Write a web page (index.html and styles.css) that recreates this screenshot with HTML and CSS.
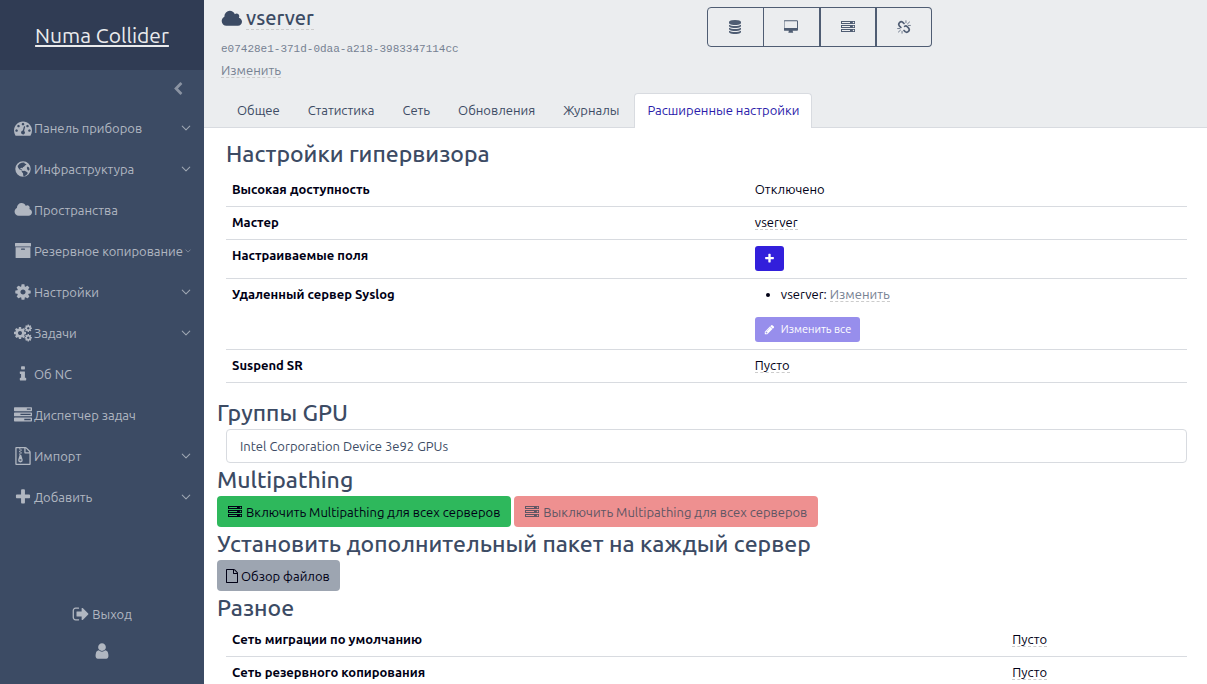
FILE: index.html
```html
<!DOCTYPE html>
<html lang="ru">
<head>
<meta charset="utf-8">
<title>vserver — Numa Collider</title>
<link rel="stylesheet" href="styles.css">
</head>
<body>
<svg class="sprite" aria-hidden="true">
  <symbol id="cloud" viewBox="0 0 1984 1792"><path d="M1984 1152q0 159-112.500 271.500t-271.500 112.500h-1088q-185 0-316.500-131.500t-131.500-316.500q0-132 71-241.500t187-163.500q-2-28-2-43 0-212 150-362t362-150q158 0 286.500 88t187.500 230q70-62 166-62 106 0 181 75t75 181q0 75-41 138 129 30 213 134.500t84 239.500z"/></symbol>
  <symbol id="database" viewBox="0 0 1792 1792"><path d="M896 768q237 0 443-43t325-127v170q0 69-103 128t-280 93.500-385 34.500-385-34.500-280-93.500-103-128v-170q119 84 325 127t443 43zm0 768q237 0 443-43t325-127v170q0 69-103 128t-280 93.500-385 34.500-385-34.500-280-93.500-103-128v-170q119 84 325 127t443 43zm0-384q237 0 443-43t325-127v170q0 69-103 128t-280 93.500-385 34.500-385-34.500-280-93.500-103-128v-170q119 84 325 127t443 43zm0-1152q208 0 385 34.500t280 93.500 103 128v128q0 69-103 128t-280 93.500-385 34.500-385-34.500-280-93.500-103-128v-128q0-69 103-128t280-93.500 385-34.500z"/></symbol>
  <symbol id="desktop" viewBox="0 0 1856 1792"><path d="M1728 992v-832q0-13-9.500-22.500t-22.500-9.500h-1600q-13 0-22.500 9.500t-9.500 22.500v832q0 13 9.500 22.500t22.500 9.500h1600q13 0 22.500-9.500t9.500-22.500zm128-832v1088q0 66-47 113t-113 47h-544q0 37 16 77.500t32 71 16 43.500q0 26-19 45t-45 19h-512q-26 0-45-19t-19-45q0-14 16-44t32-70 16-78h-544q-66 0-113-47t-47-113v-1088q0-66 47-113t113-47h1600q66 0 113 47t47 113z"/></symbol>
  <symbol id="server" viewBox="0 0 1792 1792"><path fill-rule="evenodd" d="M0 128h1792v384H0zM128 256v128h1024V256zM0 640h1792v384H0zM128 768v128h1024V768zM0 1152h1792v384H0zM128 1280v128h1024v-128zM1504 320a96 96 0 1 0 192 0a96 96 0 1 0-192 0zM1504 832a96 96 0 1 0 192 0a96 96 0 1 0-192 0zM1504 1344a96 96 0 1 0 192 0a96 96 0 1 0-192 0z"/></symbol>
  <symbol id="unlink" viewBox="0 0 18 18"><g fill="none" stroke="currentColor" stroke-linecap="round"><path stroke-width="2.200" d="M9 4.500 7.500 3Q5.300 1.300 3.300 3.300T3 7.500L5 9.600M9 13.500l1.500 1.500q2.200 1.700 4.200-.3t.3-4.200L13 8.400Q11.500 7 9.800 8.200"/><path stroke-width="1" d="M11.500 1v2.500M13.500 5l2.700-2.500M14.500 7h2.700M.8 11h2.700M1.800 15.500l2.700-2.500M6.500 14.500V17"/></g></symbol>
  <symbol id="tachometer" viewBox="0 0 1792 1792"><path d="M384 1152q0-53-37.500-90.500t-90.500-37.500-90.500 37.500-37.500 90.500 37.500 90.500 90.500 37.500 90.500-37.500 37.500-90.500zm192-448q0-53-37.500-90.500t-90.500-37.500-90.500 37.500-37.500 90.500 37.500 90.500 90.500 37.500 90.500-37.500 37.500-90.500zm428 481l101-382q6-26-7.500-48.500t-38.500-29.500-48 6.500-30 39.500l-101 382q-60 5-107 43.500t-63 98.500q-20 77 20 146t117 89 146-20 89-117q16-60-6-117t-72-91zm660-33q0-53-37.500-90.500t-90.500-37.500-90.500 37.500-37.500 90.500 37.500 90.500 90.500 37.500 90.500-37.500 37.500-90.500zm-640-640q0-53-37.500-90.500t-90.500-37.500-90.500 37.500-37.500 90.500 37.500 90.500 90.500 37.500 90.500-37.500 37.500-90.500zm448 192q0-53-37.500-90.500t-90.500-37.500-90.500 37.500-37.500 90.500 37.500 90.500 90.500 37.500 90.500-37.500 37.500-90.500zm320 448q0 261-141 483-19 29-54 29h-1402q-35 0-54-29-141-221-141-483 0-182 71-348t191-286 286-191 348-71 348 71 286 191 191 286 71 348z"/></symbol>
  <symbol id="globe" viewBox="0 0 18 18"><path fill-rule="evenodd" d="M9 1.300a7.700 7.700 0 1 0 0 15.400A7.700 7.700 0 1 0 9 1.300zM9.500 2.600l1.500.5-.5 1 1.200-.4.800.8-1.500 1-1 1.200-1 .2-.5 1.400-1-.6-1.200.6.300 1.200 1-.4.300 1.400 1 .5 1.600-.3 1.600.8 1.700 1.200-.6 1.500-1.900 1.600-1.500 1-.6-1.600-.2-1.900-1.300-1.500.2-1.300L5.500 9.500 4.200 7.700 3.600 6 5.500 3.700 7.500 2.800zM13.700 6.500l1.600 1.200.2 2-1.300 1-1-1.400-.4-1.500z"/></symbol>
  <symbol id="archive" viewBox="0 0 18 18"><path fill-rule="evenodd" d="M1.500 1h15q.5 0 .5.500V4q0 .5-.5.500h-15Q1 4.500 1 4V1.500Q1 1 1.500 1zM1.600 5.300h14.800V15.500q0 .6-.6.600H2.200q-.6 0-.6-.6zM7.600 6.600q-.6 0-.6.600t.6.600h2.800q.6 0 .6-.6t-.6-.6z"/></symbol>
  <symbol id="cog" viewBox="0 0 1792 1792"><path d="M1152 896q0-106-75-181t-181-75-181 75-75 181 75 181 181 75 181-75 75-181zm512-109v222q0 12-8 23t-20 13l-185 28q-19 54-39 91 35 50 107 138 10 12 10 25t-9 23q-27 37-99 108t-94 71q-12 0-26-9l-138-108q-44 23-91 38-16 136-29 186-7 28-36 28h-222q-14 0-24.500-8.500t-11.500-21.500l-28-184q-49-16-90-37l-141 107q-10 9-25 9-14 0-25-11-126-114-165-168-7-10-7-23 0-12 8-23 15-21 51-66.500t54-70.500q-27-50-41-99l-183-27q-13-2-21-12.500t-8-23.500v-222q0-12 8-23t19-13l186-28q14-46 39-92-40-57-107-138-10-12-10-24 0-10 9-23 26-36 98.500-107.500t94.500-71.500q13 0 26 10l138 107q44-23 91-38 16-136 29-186 7-28 36-28h222q14 0 24.500 8.500t11.500 21.500l28 184q49 16 90 37l142-107q9-9 24-9 13 0 25 10 129 119 165 170 7 8 7 22 0 12-8 23-15 21-51 66.500t-54 70.500q26 50 41 98l183 28q13 2 21 12.500t8 23.500z"/></symbol>
  <symbol id="cogs" viewBox="0 0 18 18"><use href="#cog" x="-1" y="2" width="14" height="14"/><use href="#cog" x="10" y="0" width="8.500" height="8.500"/><use href="#cog" x="10" y="9.500" width="8.500" height="8.500"/></symbol>
  <symbol id="info" viewBox="0 0 1792 1792"><path d="M1216 1344v128q0 26-19 45t-45 19h-512q-26 0-45-19t-19-45v-128q0-26 19-45t45-19h64v-384h-64q-26 0-45-19t-19-45v-128q0-26 19-45t45-19h384q26 0 45 19t19 45v576h64q26 0 45 19t19 45zm-128-1152v192q0 26-19 45t-45 19h-256q-26 0-45-19t-19-45v-192q0-26 19-45t45-19h256q26 0 45 19t19 45z"/></symbol>
  <symbol id="tasks" viewBox="0 0 1792 1792"><path fill-rule="evenodd" d="M64 128h1664q64 0 64 64v256q0 64-64 64H64q-64 0-64-64V192q0-64 64-64zM1280 256v128h384V256zM64 640h1664q64 0 64 64v256q0 64-64 64H64q-64 0-64-64V704q0-64 64-64zM640 768v128h1024V768zM64 1152h1664q64 0 64 64v256q0 64-64 64H64q-64 0-64-64v-256q0-64 64-64zM1024 1280v128h640v-128z"/></symbol>
  <symbol id="zip" viewBox="0 0 1792 1792"><path d="M1596 380q28 28 48 76t20 88v1152q0 40-28 68t-68 28h-1344q-40 0-68-28t-28-68v-1600q0-40 28-68t68-28h896q40 0 88 20t76 48zm-444-244v376h376q-10-29-22-41l-313-313q-12-12-41-22zm384 1528v-1024h-416q-40 0-68-28t-28-68v-416h-768v1536h1280z"/><path fill-rule="evenodd" d="M512 128h128v128H512zM640 256h128v128H640zM512 384h128v128H512zM640 512h128v128H640zM512 640h128v128H512zM560 800h160l150 500q20 220-230 236-250-16-230-236zM640 1216a120 76 0 1 0 0 152a120 76 0 1 0 0-152z"/></symbol>
  <symbol id="plus" viewBox="0 0 1792 1792"><path d="M1600 736v192q0 40-28 68t-68 28h-416v416q0 40-28 68t-68 28h-192q-40 0-68-28t-28-68v-416h-416q-40 0-68-28t-28-68v-192q0-40 28-68t68-28h416v-416q0-40 28-68t68-28h192q40 0 68 28t28 68v416h416q40 0 68 28t28 68z"/></symbol>
  <symbol id="signout" viewBox="0 0 1792 1792"><path d="M704 1440q0 4 1 20t.5 26.500-3 23.500-10 19.500-20.500 6.500h-320q-119 0-203.500-84.500t-84.500-203.500v-704q0-119 84.500-203.500t203.500-84.500h320q13 0 22.500 9.500t9.500 22.500q0 4 1 20t.5 26.500-3 23.500-10 19.500-20.500 6.500h-320q-66 0-113 47t-47 113v704q0 66 47 113t113 47h312l11.500 1 11.500 3 8 5.500 7 9 2 13.500zm928-544q0 26-19 45l-544 544q-19 19-45 19t-45-19-19-45v-288h-448q-26 0-45-19t-19-45v-384q0-26 19-45t45-19h448v-288q0-26 19-45t45-19 45 19l544 544q19 19 19 45z"/></symbol>
  <symbol id="user" viewBox="0 0 1792 1792"><path d="M1536 1399q0 109-62.500 187t-150.500 78h-854q-88 0-150.500-78t-62.500-187q0-85 8.500-160.500t31.500-152 58.500-131 94-89 134.500-34.500q131 128 313 128t313-128q76 0 134.500 34.500t94 89 58.500 131 31.500 152 8.500 160.500zm-256-887q0 159-112.500 271.500t-271.500 112.500-271.500-112.500-112.500-271.500 112.500-271.500 271.500-112.500 271.500 112.500 112.500 271.500z"/></symbol>
  <symbol id="pencil" viewBox="0 0 1792 1792"><path d="M491 1536l91-91-235-235-91 91v107h128v128h107zm523-928q0-22-22-22-10 0-17 7l-542 542q-7 7-7 17 0 22 22 22 10 0 17-7l542-542q7-7 7-17zm-54-192l416 416-832 832h-416v-416zm683 96q0 53-37 90l-166 166-416-416 166-165q36-38 90-38 53 0 91 38l235 234q37 39 37 91z"/></symbol>
  <symbol id="back" viewBox="0 0 1792 1792"><path d="M1427 301l-531 531 531 531q19 19 19 45t-19 45l-166 166q-19 19-45 19t-45-19l-742-742q-19-19-19-45t19-45l742-742q19-19 45-19t45 19l166 166q19 19 19 45t-19 45z"/></symbol>
  <symbol id="file" viewBox="0 0 1792 1792"><path d="M1596 380q28 28 48 76t20 88v1152q0 40-28 68t-68 28h-1344q-40 0-68-28t-28-68v-1600q0-40 28-68t68-28h896q40 0 88 20t76 48zm-444-244v376h376q-10-29-22-41l-313-313q-12-12-41-22zm384 1528v-1024h-416q-40 0-68-28t-28-68v-416h-768v1536h1280z"/></symbol>
  <symbol id="down" viewBox="0 0 16 16"><path fill="none" stroke="currentColor" stroke-width="1.700" stroke-linecap="round" stroke-linejoin="round" d="M2 5l6 6 6-6"/></symbol>
</svg>
<div class="app">
  <aside class="sidebar">
    <div class="brand"><a href="#">Numa Collider</a></div>
    <button class="collapse" aria-label="Свернуть меню"><svg class="icon-sm"><use href="#back"/></svg></button>
    <nav class="menu">
      <a href="#"><svg class="icon"><use href="#tachometer"/></svg><span>Панель приборов</span><svg class="caret"><use href="#down"/></svg></a>
      <a href="#"><svg class="icon"><use href="#globe"/></svg><span>Инфраструктура</span><svg class="caret"><use href="#down"/></svg></a>
      <a href="#"><svg class="icon"><use href="#cloud"/></svg><span>Пространства</span></a>
      <a href="#"><svg class="icon"><use href="#archive"/></svg><span>Резервное копирование</span><svg class="caret"><use href="#down"/></svg></a>
      <a href="#"><svg class="icon"><use href="#cog"/></svg><span>Настройки</span><svg class="caret"><use href="#down"/></svg></a>
      <a href="#"><svg class="icon"><use href="#cogs"/></svg><span>Задачи</span><svg class="caret"><use href="#down"/></svg></a>
      <a href="#"><svg class="icon"><use href="#info"/></svg><span>Об NC</span></a>
      <a href="#"><svg class="icon"><use href="#tasks"/></svg><span>Диспетчер задач</span></a>
      <a href="#"><svg class="icon"><use href="#zip"/></svg><span>Импорт</span><svg class="caret"><use href="#down"/></svg></a>
      <a href="#"><svg class="icon"><use href="#plus"/></svg><span>Добавить</span><svg class="caret"><use href="#down"/></svg></a>
    </nav>
    <div class="account">
      <a href="#"><svg class="icon"><use href="#signout"/></svg>Выход</a>
      <a href="#" aria-label="Пользователь"><svg class="icon"><use href="#user"/></svg></a>
    </div>
  </aside>
  <div class="page">
    <header class="header">
      <div class="header-top">
        <div class="identity">
          <h2><svg class="title-icon"><use href="#cloud"/></svg><span class="editable">vserver</span></h2>
          <div class="uuid">e07428e1-371d-0daa-a218-3983347114cc</div>
          <div class="description"><span class="editable muted">Изменить</span></div>
        </div>
        <div class="actions">
          <button aria-label="Хранилище"><svg class="icon-sm"><use href="#database"/></svg></button>
          <button aria-label="ВМ"><svg class="icon-sm"><use href="#desktop"/></svg></button>
          <button aria-label="Сервер"><svg class="icon-sm"><use href="#server"/></svg></button>
          <button aria-label="Отключить"><svg class="icon-sm"><use href="#unlink"/></svg></button>
        </div>
      </div>
      <nav class="tabs">
        <a href="#">Общее</a>
        <a href="#">Статистика</a>
        <a href="#">Сеть</a>
        <a href="#">Обновления</a>
        <a href="#">Журналы</a>
        <a href="#" class="active" aria-current="page">Расширенные настройки</a>
      </nav>
    </header>
    <main class="content">
      <section class="inset hypervisor">
        <h3>Настройки гипервизора</h3>
        <table>
          <tr><th scope="row">Высокая доступность</th><td>Отключено</td></tr>
          <tr><th scope="row">Мастер</th><td><span class="editable">vserver</span></td></tr>
          <tr><th scope="row">Настраиваемые поля</th><td><button class="btn-small" aria-label="Добавить поле"><svg class="icon-xs"><use href="#plus"/></svg></button></td></tr>
          <tr><th scope="row">Удаленный сервер Syslog</th><td>
            <ul><li>vserver: <span class="editable muted">Изменить</span></li></ul>
            <button class="btn-small" disabled><svg class="icon-xs"><use href="#pencil"/></svg>Изменить все</button>
          </td></tr>
          <tr><th scope="row">Suspend SR</th><td><span class="editable">Пусто</span></td></tr>
        </table>
      </section>
      <h3>Группы GPU</h3>
      <ul class="inset gpu-list"><li>Intel Corporation Device 3e92 GPUs</li></ul>
      <h3>Multipathing</h3>
      <div class="buttons">
        <button class="btn success"><svg class="icon-sm"><use href="#server"/></svg>Включить Multipathing для всех серверов</button>
        <button class="btn danger" disabled><svg class="icon-sm"><use href="#server"/></svg>Выключить Multipathing для всех серверов</button>
      </div>
      <h3>Установить дополнительный пакет на каждый сервер</h3>
      <div class="buttons">
        <button class="btn browse"><svg class="icon-sm"><use href="#file"/></svg>Обзор файлов</button>
      </div>
      <h3>Разное</h3>
      <section class="inset misc">
        <table>
          <tr><th scope="row">Сеть миграции по умолчанию</th><td><span class="editable">Пусто</span></td></tr>
          <tr><th scope="row">Сеть резервного копирования</th><td><span class="editable">Пусто</span></td></tr>
        </table>
      </section>
    </main>
  </div>
</div>
</body>
</html>
```
FILE: styles.css
```css
* { box-sizing: border-box; }

body {
  margin: 0;
  font: 13px/20px Ubuntu, "Noto Sans", sans-serif;
  color: #000015;
  background: #fff;
  overflow: hidden;
}

svg { fill: currentColor; flex: none; }
a { color: inherit; text-decoration: none; }
button { font: inherit; color: inherit; cursor: pointer; }
button:disabled { cursor: default; }

.sprite { position: absolute; width: 0; height: 0; }
.icon { width: 18px; height: 18px; }
.icon-sm { width: 14px; height: 14px; }
.icon-xs { width: 11px; height: 11px; }

.app { display: flex; height: 100vh; }

/* Sidebar */
.sidebar {
  display: flex;
  flex-direction: column;
  flex: 0 0 204px;
  min-width: 0;
  background: #3c4b64;
  color: #b1b7c1;
}
.brand {
  display: flex;
  align-items: center;
  justify-content: center;
  height: 70px;
  flex: none;
  background: #303c54;
  color: #eaebed;
  font-size: 21px;
}
.brand a { text-decoration: underline; }
.collapse {
  display: flex;
  align-self: flex-end;
  align-items: center;
  height: 37px;
  margin-right: 19px;
  padding: 0;
  border: 0;
  background: none;
  color: #8a93a2;
}
.menu { display: flex; flex-direction: column; }
.menu a {
  display: flex;
  align-items: center;
  height: 41px;
  padding: 0 13px 0 14px;
  gap: 2px;
  white-space: nowrap;
}
.caret { width: 10px; height: 10px; margin-left: auto; flex: 0 1 10px; min-width: 0; color: #9da5b1; }
.account {
  display: flex;
  flex-direction: column;
  align-items: center;
  gap: 18px;
  margin-top: auto;
  padding-bottom: 24px;
}
.account a { display: flex; align-items: center; gap: 2px; }

/* Header */
.page { flex: 1; min-width: 0; }
.header {
  background: #ebedef;
  border-bottom: 1px solid #d8dbe0;
  color: #3c4b64;
}
.header-top {
  display: grid;
  grid-template-columns: 1fr 1fr;
  padding: 7px 15px 0 17px;
}
h2, h3 {
  margin: 0;
  font-family: "Ubuntu Medium", Ubuntu, "Noto Sans", sans-serif;
  font-weight: 500;
  color: #3c4b64;
}
h2 {
  display: flex;
  align-items: center;
  gap: 4px;
  font-size: 20px;
  line-height: 22px;
}
.title-icon { width: 21px; height: 20px; }
.uuid {
  margin-top: 9px;
  font: 11px/20px "Liberation Mono", monospace;
  color: #768192;
}
.description { margin-top: 1px; }
.editable { border-bottom: 1px dashed #ccc; }
.muted { color: #768192; }
.actions { display: flex; align-items: flex-start; }
.actions button {
  display: flex;
  align-items: center;
  justify-content: center;
  width: 57px;
  height: 40px;
  padding: 0;
  border: 1px solid #4f5d73;
  background: none;
  color: #4f5d73;
}
.actions button + button { margin-left: -1px; }
.actions button:nth-child(n+3) { border-left-width: 2px; }
.actions button:first-child { border-radius: 4px 0 0 4px; }
.actions button:last-child { border-radius: 0 4px 4px 0; }
.tabs { display: flex; gap: 2px; margin: 13px 0 -1px 20px; }
.tabs a {
  padding: 6px 12px 8px;
  border: 1px solid transparent;
  border-bottom: 0;
  border-radius: 4px 4px 0 0;
}
.tabs .active {
  background: #fff;
  border-color: #d8dbe0;
  color: #2a1aaa;
}

/* Content */
.content { padding: 9px 11px 0 13px; }
h3 { margin: 3px 0 2px; font-size: 23px; line-height: 28px; }
.inset { margin: 0 9px; }
table {
  width: 100%;
  border-collapse: collapse;
  table-layout: fixed;
  line-height: 19px;
}
th, td {
  padding: 6px 6px 7px;
  border-bottom: 1px solid #d8dbe0;
  text-align: left;
  vertical-align: top;
}
.hypervisor { margin-bottom: 16px; }
.hypervisor h3 { margin-bottom: 6px; }
.hypervisor th { width: 54.4%; }
.misc th { width: 81.2%; }
td ul { margin: 0 0 13px; padding-left: 26px; }
.btn-small {
  display: flex;
  align-items: center;
  gap: 6px;
  height: 25px;
  padding: 0 9px;
  border: 0;
  border-radius: 3px;
  background: #321fdb;
  color: #fff;
  font-size: 11px;
}
.btn-small:disabled { opacity: .5; }
.gpu-list {
  padding: 6px 13px;
  border: 1px solid #d8dbe0;
  border-radius: 4px;
  list-style: none;
  color: #3c4b64;
}
.buttons { display: flex; gap: 3px; }
.btn {
  display: flex;
  align-items: center;
  gap: 4px;
  height: 31px;
  padding: 0 11px;
  border: 0;
  border-radius: 4px;
}
.success { background: #2eb85c; }
.danger { background: #ee9090; color: #5f5664; }
.browse { gap: 2px; padding: 0 10px 0 8px; background: #9da5b1; }
```
